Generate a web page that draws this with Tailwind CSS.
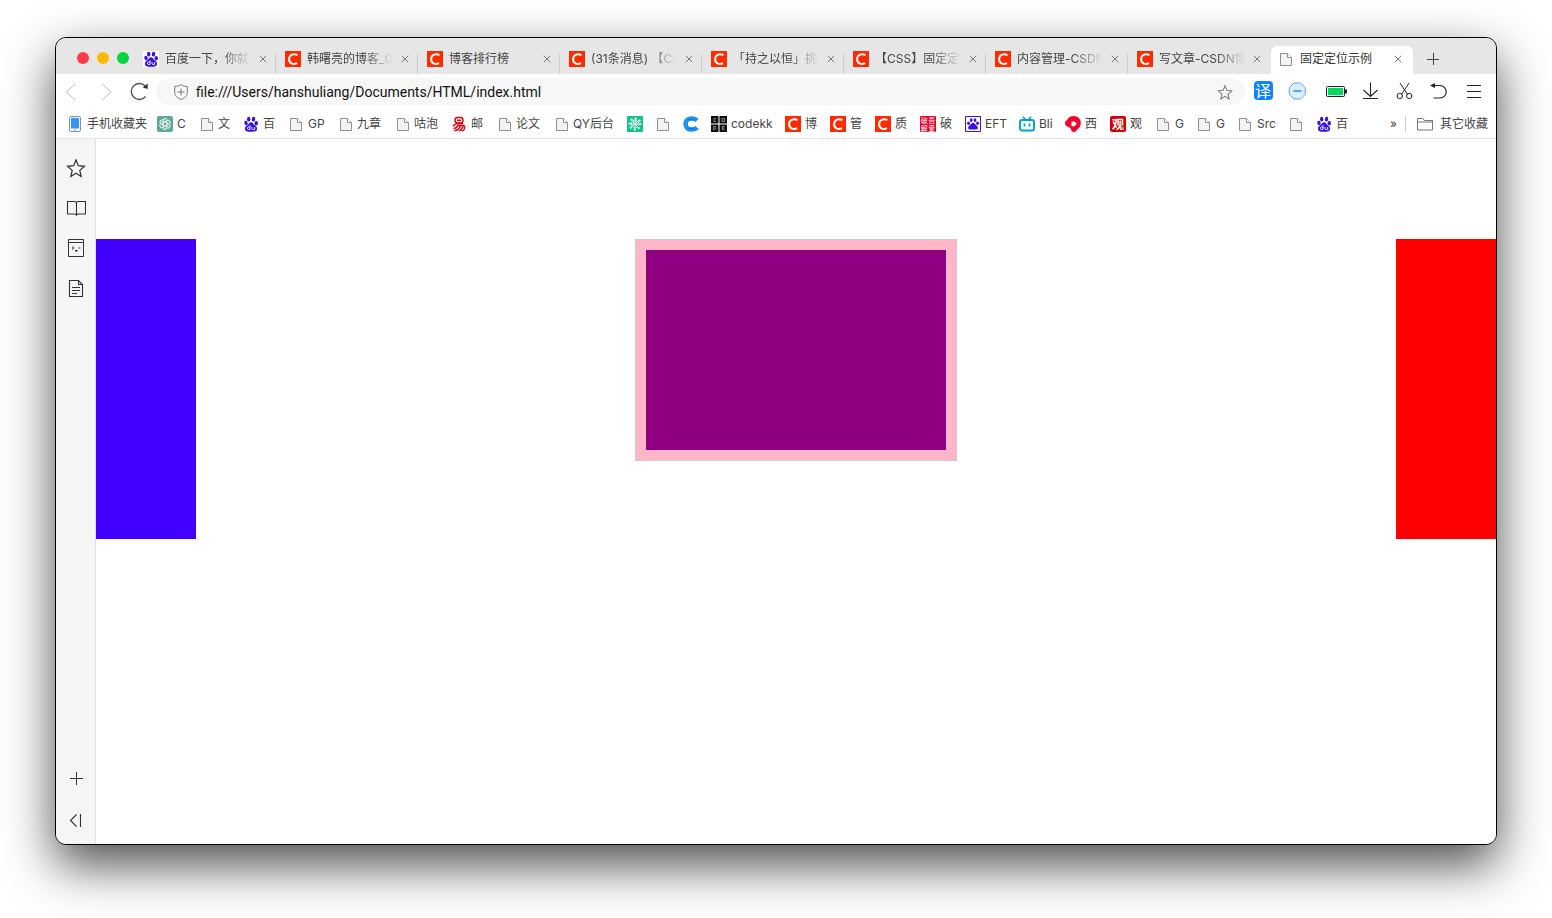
<!DOCTYPE html>
<html lang="zh-CN">
<head>
<meta charset="utf-8">
<title>固定定位示例</title>
<script src="https://cdn.jsdelivr.net/npm/@tailwindcss/browser@4"></script>
</head>
<body class="flex min-h-screen flex-col bg-white px-[55px] pt-[37px] pb-[73px] font-['Inter','Noto_Sans_CJK_SC',sans-serif] text-xs text-[#444]">
<svg class="hidden" aria-hidden="true">
  <symbol id="doc" viewBox="0 0 16 16"><path d="M2.500 2.500h7l4 4v8h-11z" fill="#f3f3f3" stroke="#8f8f8f"/><path d="M9.500 2.500v4h4" fill="#fff" stroke="#8f8f8f"/></symbol>
  <symbol id="csdn" viewBox="0 0 16 16"><path fill="#ff2a00" d="M0 0h16v16H0z"/><path d="M12.500 4.200C9.500 2.600 4.200 2.800 4.100 8.300c0 4.700 4.700 5.500 7.900 3.900" fill="none" stroke="#fff" stroke-width="2"/></symbol>
  <symbol id="baidu" viewBox="0 0 16 16"><g fill="#3a10e5"><ellipse cx="5.700" cy="3.200" rx="1.700" ry="2.400"/><ellipse cx="10.500" cy="3.200" rx="1.700" ry="2.400" transform="rotate(10 10.500 3.200)"/><ellipse cx="3" cy="7" rx="1.700" ry="2.200" transform="rotate(-12 3 7)"/><ellipse cx="13.200" cy="7.200" rx="1.700" ry="2.200"/><path d="M8 6.200c1.700 0 2.200 1.700 3.500 2.900 1.600 1.200 2.900 2.200 2.500 4.400-.5 2.400-3 2.200-6 2.200s-5.500.2-6-2.200c-.4-2.200.9-3.200 2.500-4.400C5.800 7.900 6.300 6.200 8 6.200z"/></g><g fill="none" stroke="#fff" stroke-width=".9"><path d="M7 9.300v4.200H5.500c-1.500 0-1.500-2.500 0-2.500H7M9 11v1.400c0 .8.500 1.100 1.100 1.100h1.600V11"/></g></symbol>
  <symbol id="x" viewBox="0 0 8 8"><path d="M.7.700l6.600 6.600M7.300.7L.7 7.300" fill="none" stroke="#777"/></symbol>
  <symbol id="star" viewBox="0 0 20 20"><path d="M10 .8l2.300 5.900 6.200.6-4.700 4.100 1.400 6.100-5.200-3.300-5.200 3.300 1.400-6.100L1.500 7.300l6.200-.6z" fill="none" stroke="currentColor" stroke-width="1.200"/></symbol>
</svg>

<div class="flex flex-1 flex-col overflow-hidden rounded-[11px] border border-black bg-white shadow-[0_20px_50px_rgba(0,0,0,0.7)]">

  <header>
    <div class="flex h-9 items-end bg-[#e6e6e6]">
      <div class="flex h-full w-[77px] shrink-0 items-center gap-2 pt-1 pl-[21px]">
        <button aria-label="关闭" class="size-3 rounded-full bg-[#ff3b46]"></button>
        <button aria-label="最小化" class="size-3 rounded-full bg-[#ffb900]"></button>
        <button aria-label="全屏" class="size-3 rounded-full bg-[#00d73c]"></button>
      </div>
      <nav class="flex h-7 min-w-0 flex-1 items-center" aria-label="标签页">
        <div class="flex h-7 w-[142px] items-center gap-1.5 pb-0.5 pl-2.5"><svg class="size-4 shrink-0 bg-white"><use href="#baidu"/></svg><a href="#" class="w-[86px] overflow-hidden whitespace-nowrap [mask-image:linear-gradient(90deg,#000_65%,transparent)]">百度一下，你就</a><button aria-label="关闭标签" class="ml-0.5"><svg class="size-2"><use href="#x"/></svg></button></div>
        <div class="flex h-7 w-[142px] items-center gap-1.5 bg-[linear-gradient(#ccc,#ccc)] bg-[length:1px_20px] bg-[position:0_bottom] bg-no-repeat pb-0.5 pl-2.5"><svg class="size-4 shrink-0"><use href="#csdn"/></svg><a href="#" class="w-[86px] overflow-hidden whitespace-nowrap [mask-image:linear-gradient(90deg,#000_65%,transparent)]">韩曙亮的博客_C</a><button aria-label="关闭标签" class="ml-0.5"><svg class="size-2"><use href="#x"/></svg></button></div>
        <div class="flex h-7 w-[142px] items-center gap-1.5 bg-[linear-gradient(#ccc,#ccc)] bg-[length:1px_20px] bg-[position:0_bottom] bg-no-repeat pb-0.5 pl-2.5"><svg class="size-4 shrink-0"><use href="#csdn"/></svg><a href="#" class="w-[86px] overflow-hidden whitespace-nowrap">博客排行榜</a><button aria-label="关闭标签" class="ml-0.5"><svg class="size-2"><use href="#x"/></svg></button></div>
        <div class="flex h-7 w-[142px] items-center gap-1.5 bg-[linear-gradient(#ccc,#ccc)] bg-[length:1px_20px] bg-[position:0_bottom] bg-no-repeat pb-0.5 pl-2.5"><svg class="size-4 shrink-0"><use href="#csdn"/></svg><a href="#" class="w-[86px] overflow-hidden whitespace-nowrap [mask-image:linear-gradient(90deg,#000_65%,transparent)]">(31条消息) 【CS</a><button aria-label="关闭标签" class="ml-0.5"><svg class="size-2"><use href="#x"/></svg></button></div>
        <div class="flex h-7 w-[142px] items-center gap-1.5 bg-[linear-gradient(#ccc,#ccc)] bg-[length:1px_20px] bg-[position:0_bottom] bg-no-repeat pb-0.5 pl-2.5"><svg class="size-4 shrink-0"><use href="#csdn"/></svg><a href="#" class="w-[86px] overflow-hidden whitespace-nowrap [mask-image:linear-gradient(90deg,#000_65%,transparent)]">「持之以恒」挑</a><button aria-label="关闭标签" class="ml-0.5"><svg class="size-2"><use href="#x"/></svg></button></div>
        <div class="flex h-7 w-[142px] items-center gap-1.5 bg-[linear-gradient(#ccc,#ccc)] bg-[length:1px_20px] bg-[position:0_bottom] bg-no-repeat pb-0.5 pl-2.5"><svg class="size-4 shrink-0"><use href="#csdn"/></svg><a href="#" class="w-[86px] overflow-hidden whitespace-nowrap [mask-image:linear-gradient(90deg,#000_65%,transparent)]">【CSS】固定定</a><button aria-label="关闭标签" class="ml-0.5"><svg class="size-2"><use href="#x"/></svg></button></div>
        <div class="flex h-7 w-[142px] items-center gap-1.5 bg-[linear-gradient(#ccc,#ccc)] bg-[length:1px_20px] bg-[position:0_bottom] bg-no-repeat pb-0.5 pl-2.5"><svg class="size-4 shrink-0"><use href="#csdn"/></svg><a href="#" class="w-[86px] overflow-hidden whitespace-nowrap [mask-image:linear-gradient(90deg,#000_65%,transparent)]">内容管理-CSDN</a><button aria-label="关闭标签" class="ml-0.5"><svg class="size-2"><use href="#x"/></svg></button></div>
        <div class="flex h-7 w-[142px] items-center gap-1.5 bg-[linear-gradient(#ccc,#ccc)] bg-[length:1px_20px] bg-[position:0_bottom] bg-no-repeat pb-0.5 pl-2.5"><svg class="size-4 shrink-0"><use href="#csdn"/></svg><a href="#" class="w-[86px] overflow-hidden whitespace-nowrap [mask-image:linear-gradient(90deg,#000_65%,transparent)]">写文章-CSDN博</a><button aria-label="关闭标签" class="ml-0.5"><svg class="size-2"><use href="#x"/></svg></button></div>
        <div class="ml-0.5 flex h-7 w-[142px] items-center gap-1.5 rounded-t-md bg-white pb-0.5 pl-[7px] text-[#333]"><svg class="size-4 shrink-0"><use href="#doc"/></svg><a href="#" aria-current="page" class="w-[86px] overflow-hidden whitespace-nowrap">固定定位示例</a><button aria-label="关闭标签" class="ml-0.5"><svg class="size-2"><use href="#x"/></svg></button></div>
        <button aria-label="新建标签页" class="ml-3.5 pb-0.5"><svg class="size-3" viewBox="0 0 12 12"><path d="M6.500 0v12M0 6.500h12" stroke="#444"/></svg></button>
      </nav>
    </div>

    <div class="flex h-[35px] items-center pr-3 pl-[9px] text-[#222]">
      <button aria-label="后退"><svg class="h-[18px] w-3" viewBox="0 0 12 18"><path d="M10 1L1.500 9 10 17" fill="none" stroke="#b5b5b5"/></svg></button>
      <button aria-label="前进" class="ml-6"><svg class="h-[18px] w-3" viewBox="0 0 12 18"><path d="M1.500 1L10 9l-8.500 8" fill="none" stroke="#b5b5b5"/></svg></button>
      <button aria-label="刷新" class="ml-4"><svg class="size-5" viewBox="0 0 20 20"><path d="M16.500 4.500A8 8 0 1 0 16.500 14.500" fill="none" stroke="#555" stroke-width="1.400"/><path d="M18.700 1.500v5.500l-5-1.500z" fill="#333"/></svg></button>
      <form class="ml-[7px] flex h-[27px] min-w-0 flex-1 items-center rounded-full bg-[#f7f7f7] pr-3 pl-[18px]">
        <svg class="h-4 w-[14px] shrink-0" viewBox="0 0 14 16"><path d="M7 .7c2 1.300 3.800 1.700 6.300 1.700v6c0 3.300-2.500 5.500-6.300 7-3.800-1.500-6.300-3.700-6.300-7v-6C3.200 2.400 5 2 7 .7zM7 4.500v7M3.500 8h7" fill="none" stroke="#777"/></svg>
        <input type="text" aria-label="地址栏" value="file:///Users/hanshuliang/Documents/HTML/index.html" class="ml-2 min-w-0 flex-1 bg-transparent font-['Roboto',sans-serif] text-sm text-[#111] outline-none">
        <button type="button" aria-label="收藏" class="text-[#777]"><svg class="size-4" viewBox="0 0 20 20"><path d="M10 2l2.300 5.900 6.200.6-4.700 4.100 1.400 6.100-5.200-3.300-5.200 3.300 1.400-6.100-4.700-4.100 6.200-.6z" fill="none" stroke="currentColor" stroke-width="1.300"/></svg></button>
      </form>
      <div class="ml-2 flex items-center gap-[14px] pb-0.5">
        <button aria-label="翻译" class="flex size-5 items-center justify-center"><span class="flex size-[19px] items-center justify-center rounded bg-[#0a84ff] text-base leading-none text-white">译</span></button>
        <button aria-label="广告拦截"><svg class="size-5" viewBox="0 0 20 20"><path d="M7 2h6.600l4.700 4.700v6.600L13.600 18H7l-4.700-4.700V6.700z" fill="#dceeff" stroke="#5aaaf5"/><path d="M6.300 10h8" stroke="#2d8cf0" stroke-width="1.500"/></svg></button>
        <button aria-label="电池" class="ml-1"><svg class="h-3 w-[22px]" viewBox="0 0 22 12"><rect x="1.500" y="1.500" width="18" height="10" rx="1" fill="#fff" stroke="#222"/><path d="M3 3h15v7H3z" fill="#00d95a"/><path d="M21 4.500v4" stroke="#222" stroke-width="2"/></svg></button>
        <button aria-label="下载"><svg class="size-5" viewBox="0 0 20 20"><path d="M9.500 1.500v14M2.500 9l7 6.500 7-6.500M2 17.500h15" fill="none" stroke="#222" stroke-width="1.100"/></svg></button>
        <button aria-label="截图"><svg class="size-5" viewBox="0 0 20 20"><g fill="none" stroke="#222"><path d="M5 2l7.500 11.500M14 2L6.500 13.500"/><circle cx="4.800" cy="15" r="2.700"/><circle cx="14.200" cy="15" r="2.700"/></g></svg></button>
        <button aria-label="恢复"><svg class="size-5" viewBox="0 0 20 20"><path d="M3 4.500h8a6.200 6.200 0 0 1 0 12.500H4.500" fill="none" stroke="#222" stroke-width="1.200"/><path d="M1 4.500l5-2.500v5z" fill="#222"/></svg></button>
        <button aria-label="菜单" class="ml-px"><svg class="size-5" viewBox="0 0 20 20"><path d="M3 4.500h14M3 10.500h14M3 16.500h14" stroke="#222"/></svg></button>
      </div>
    </div>

    <nav aria-label="书签栏" class="flex h-[30px] items-center border-b border-[#e4e4e4] pl-[11px] whitespace-nowrap">
      <a href="#" class="flex w-[90px] items-center gap-1"><svg class="size-4 shrink-0" viewBox="0 0 16 16"><rect x="2.500" y=".5" width="11" height="15" rx="1.500" fill="#fff" stroke="#7d93a8"/><path d="M4 2h8v10.500H4z" fill="#3396f7"/><path d="M7 14h2" stroke="#7d93a8"/></svg>手机收藏夹</a>
      <a href="#" class="flex w-[42px] items-center gap-1"><svg class="size-4 shrink-0" viewBox="0 0 16 16"><rect width="16" height="16" rx="2" fill="#5eaa94"/><g fill="none" stroke="#fff" stroke-width=".7"><path id="petal" d="M6 8.500V4.700a2.400 2.400 0 0 1 4.600-.9M6 6.900l3.500-2a2.400 2.400 0 0 1 3.500 1.600"/><use href="#petal" transform="rotate(60 8 8)"/><use href="#petal" transform="rotate(120 8 8)"/><use href="#petal" transform="rotate(180 8 8)"/><use href="#petal" transform="rotate(240 8 8)"/><use href="#petal" transform="rotate(300 8 8)"/></g></svg>C</a>
      <a href="#" class="flex w-11 items-center gap-[3px]"><svg class="size-4 shrink-0"><use href="#doc"/></svg>文</a>
      <a href="#" class="flex w-[45px] items-center gap-1"><svg class="size-4 shrink-0"><use href="#baidu"/></svg>百</a>
      <a href="#" class="flex w-[50px] items-center gap-1"><svg class="size-4 shrink-0"><use href="#doc"/></svg>GP</a>
      <a href="#" class="flex w-[57px] items-center gap-[3px]"><svg class="size-4 shrink-0"><use href="#doc"/></svg>九章</a>
      <a href="#" class="flex w-14 items-center gap-[3px]"><svg class="size-4 shrink-0"><use href="#doc"/></svg>咕泡</a>
      <a href="#" class="flex w-[46px] items-center gap-1"><svg class="size-4 shrink-0" viewBox="0 0 16 16"><g fill="none" stroke="#e60012" stroke-width="1.500"><rect x="4" y="1.500" width="8" height="5.500" rx="2.700"/><path d="M6 4.200h4M12 7.500H6.500C4.500 7.500 3 9 2 10.200M6 9.500h6.500c1.700.5 1.500 4.500-.7 5.300l-1.300-.4M6.500 10c-.7 1.500-2.300 2.500-4 2.500M9.300 10c-1 2.600-3 4.400-6 4.800M12 10.500c-.7 2-2 3.600-4.200 4.500"/></g></svg>邮</a>
      <a href="#" class="flex w-[57px] items-center gap-[3px]"><svg class="size-4 shrink-0"><use href="#doc"/></svg>论文</a>
      <a href="#" class="flex w-[73px] items-center gap-[3px]"><svg class="size-4 shrink-0"><use href="#doc"/></svg>QY后台</a>
      <a href="#" aria-label="书签" class="flex w-7 items-center"><svg class="size-4" viewBox="0 0 16 16"><path fill="#12c48b" d="M0 0h16v16H0z"/><path d="M8 3v10M3 8h10M4.500 4.500l7 7M11.500 4.500l-7 7" stroke="#fff" stroke-width=".9"/><circle cx="8" cy="8" r="5.500" fill="none" stroke="#fff" stroke-width="2.200" stroke-linecap="round" stroke-dasharray="0.100 4.220"/><circle cx="8" cy="8" r="3.600" fill="none" stroke="#fff" stroke-width="1.300" stroke-dasharray="1.400 1.427"/></svg></a>
      <a href="#" aria-label="书签" class="flex w-7 items-center"><svg class="size-4"><use href="#doc"/></svg></a>
      <a href="#" aria-label="书签" class="flex w-7 items-center"><svg class="size-4" viewBox="0 0 16 16"><path d="M14 4.500C12.500 2.900 10.700 2.500 8.500 2.500 5 2.500 2.600 4.800 2.600 8s2.400 5.500 5.900 5.500c2.200 0 4-.4 5.500-2" fill="none" stroke="#1a94f0" stroke-width="4.600"/><path d="M5 3.500h6M5 12.700h6" stroke="#1170cc" stroke-width=".8"/></svg></a>
      <a href="#" class="flex w-[74px] items-center gap-1"><svg class="size-4 shrink-0" viewBox="0 0 16 16"><path d="M0 0h7.500v7.500H0zM8.500 0H16v7.500H8.500zM0 8.500h7.500V16H0zM8.500 8.500H16V16H8.500z" fill="#111"/><g fill="none" stroke="#bbb" stroke-width=".7"><path d="M5 2.500H3v3h2M11 2.500h2.500v3H11zM2.500 10.500H4l1 1.500-1 1.500H2.500zM13.500 10.500h-2v3h2M11.500 12h1.500"/></g></svg>codekk</a>
      <a href="#" class="flex w-[45px] items-center gap-1"><svg class="size-4 shrink-0"><use href="#csdn"/></svg>博</a>
      <a href="#" class="flex w-[45px] items-center gap-1"><svg class="size-4 shrink-0"><use href="#csdn"/></svg>管</a>
      <a href="#" class="flex w-[45px] items-center gap-1"><svg class="size-4 shrink-0"><use href="#csdn"/></svg>质</a>
      <a href="#" class="flex w-[45px] items-center gap-1"><svg class="size-4 shrink-0" viewBox="0 0 16 16"><rect width="16" height="16" rx="1" fill="#e60020"/><g fill="#fff" font-size="7"><text x=".7" y="7">破</text><text x="8.300" y="7">吾</text><text x=".7" y="14.500">解</text><text x="8.300" y="14.500">爱</text></g></svg>破</a>
      <a href="#" class="flex w-[54px] items-center gap-1"><svg class="size-4 shrink-0" viewBox="0 0 16 16"><path d="M.5.500h15v15H.5z" fill="#fff" stroke="#3a10e5"/><g fill="#3a10e5"><ellipse cx="6.200" cy="4.100" rx="1.400" ry="1.900"/><ellipse cx="10" cy="4.100" rx="1.400" ry="1.900"/><ellipse cx="3.500" cy="7.300" rx="1.400" ry="1.700"/><ellipse cx="12.600" cy="7.300" rx="1.400" ry="1.700"/><path d="M8 6.800c1.500 0 1.900 1.300 3 2.300 1.200 1 2.200 1.800 1.800 3.200-.5 1.700-2.300 1.200-4.800 1.200s-4.300.5-4.800-1.200c-.4-1.400.6-2.200 1.800-3.200 1.100-1 1.500-2.300 3-2.300z"/></g></svg>EFT</a>
      <a href="#" class="flex w-[46px] items-center gap-1"><svg class="size-4 shrink-0" viewBox="0 0 16 16"><rect x="1" y="4" width="14" height="10.500" rx="2" fill="#fff" stroke="#00a1d6" stroke-width="1.900"/><path d="M4 .8l2.300 2.700M12 .8L9.700 3.500M5.500 7.500v3M10.500 7.500v3" stroke="#00a1d6" stroke-width="1.700"/></svg>Bli</a>
      <a href="#" class="flex w-[45px] items-center gap-1"><svg class="size-4 shrink-0" viewBox="0 0 16 16"><path d="M8.500 0c4.500 0 7.300 3 7.300 7 0 3-1.500 5-3.300 6.300-1 .8-1 1.500-2 2.200-1.500.9-4 .3-4.300-1.500C6 12 4.500 11.500 3 10.800 1.300 10 0 9.500 0 7c0-2 1.700-2.500 2.300-3.500C3.500 1.500 5.500 0 8.500 0z" fill="#f5002d"/><path d="M6.500 5.500h3l2.300 2.300-2.300 2.500h-3z" fill="#fff"/></svg>西</a>
      <a href="#" class="flex w-[45px] items-center gap-1"><svg class="size-4 shrink-0" viewBox="0 0 16 16"><rect width="16" height="16" rx="2" fill="#d60000"/><text x="2" y="12.500" font-size="12" font-weight="700" fill="#fff">观</text></svg>观</a>
      <a href="#" class="flex w-[41px] items-center gap-1"><svg class="size-4 shrink-0"><use href="#doc"/></svg>G</a>
      <a href="#" class="flex w-[41px] items-center gap-1"><svg class="size-4 shrink-0"><use href="#doc"/></svg>G</a>
      <a href="#" class="flex w-[51px] items-center gap-1"><svg class="size-4 shrink-0"><use href="#doc"/></svg>Src</a>
      <a href="#" aria-label="书签" class="flex w-7 items-center"><svg class="size-4"><use href="#doc"/></svg></a>
      <a href="#" class="flex items-center gap-1"><svg class="size-4 shrink-0"><use href="#baidu"/></svg>百</a>
      <div class="ml-auto flex items-center pr-2">
        <button aria-label="更多书签">»</button>
        <span class="ml-2 h-4 w-px bg-[#ccc]"></span>
        <a href="#" class="ml-[11px] flex items-center gap-[7px]"><svg class="size-4" viewBox="0 0 16 16"><path d="M.5 2.500h5.500l1.500 2h8v9.500H.5zM.5 6h15" fill="none" stroke="#777"/></svg>其它收藏</a>
      </div>
    </nav>
  </header>

  <div class="flex flex-1">
    <aside class="flex w-10 shrink-0 flex-col items-center border-r border-[#e0e2e2] bg-[#f4f6f6] pt-5 pb-[13px] text-[#333]">
      <div class="flex flex-col gap-5">
        <button aria-label="收藏"><svg class="block size-5"><use href="#star"/></svg></button>
        <button aria-label="阅读"><svg class="block size-5" viewBox="0 0 20 20"><path d="M10.500 3.500v13M10.500 3.500c-.7-1-1.500-1-2.500-1H1.500v12.500H8c1 0 2 0 2.500 1 .5-1 1.500-1 2.500-1h6.500V2.500H13c-1 0-1.800 0-2.500 1z" fill="none" stroke="#333" stroke-width="1.100"/></svg></button>
        <button aria-label="漫画"><svg class="block size-5" viewBox="0 0 20 20"><path d="M17.500 3.500v14h-15v-17h15v3h-15" fill="none" stroke="#333"/><path d="M6 7.500l2 1.500-2 1.500M12.500 9h2M9 11.500h2.500l-1.250 1z" fill="none" stroke="#333"/></svg></button>
        <button aria-label="文档"><svg class="block size-5" viewBox="0 0 20 20"><path d="M3.500 1.500h9l4 4v12h-13zM12.500 1.500v4h4M6 8.500h8M6 11.500h8M6 14.500h5" fill="none" stroke="#333" stroke-width="1.100"/></svg></button>
      </div>
      <div class="mt-auto flex flex-col gap-[22px]">
        <button aria-label="添加"><svg class="block size-5" viewBox="0 0 20 20"><path d="M10.500 3v13M4 9.500h13" stroke="#333"/></svg></button>
        <button aria-label="收起侧栏"><svg class="block size-5" viewBox="0 0 20 20"><path d="M10.500 3.500L4.500 9.500l6 6M14.500 3v13" fill="none" stroke="#333" stroke-width="1.100"/></svg></button>
      </div>
    </aside>
    <main class="flex min-w-0 flex-1 items-start justify-between bg-white pt-[100px]">
      <div class="h-[300px] w-[100px] bg-[#4200ff]"></div>
      <div class="border border-[#ccc] bg-[#ffb6c8] p-2.5"><div class="h-[200px] w-[300px] bg-[#8e0080]"></div></div>
      <div class="h-[300px] w-[100px] bg-[#ff0000]"></div>
    </main>
  </div>
</div>
</body>
</html>
